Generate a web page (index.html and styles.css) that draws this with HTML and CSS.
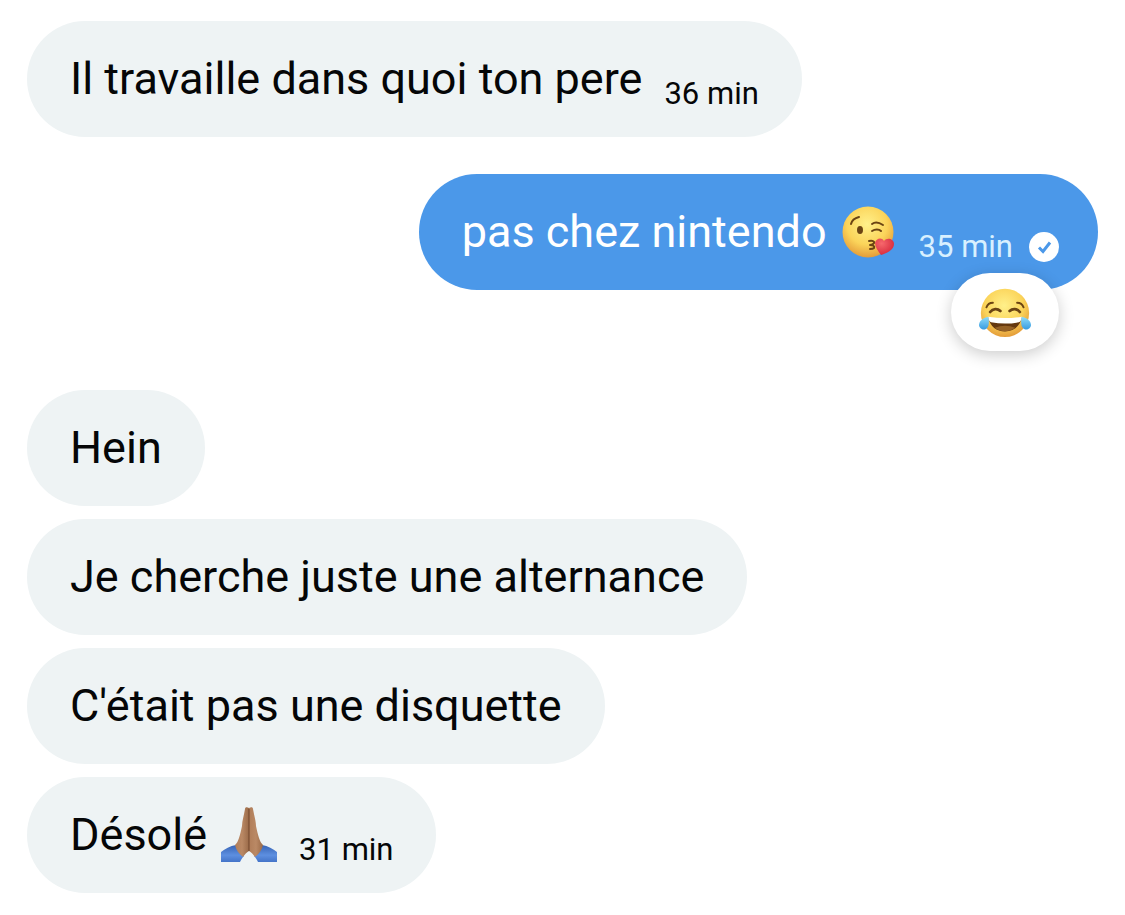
FILE: index.html
```html
<!DOCTYPE html>
<html lang="fr">
<head>
    <meta charset="UTF-8">
    <meta name="viewport" content="width=device-width, initial-scale=1.0">
    <title>Messages</title>
    <link rel="stylesheet" href="styles.css">
</head>
<body>
    <main class="chat">
        <div class="group">
            <div class="bubble">
                <span class="text">Il travaille dans quoi ton pere</span>
                <time class="time">36 min</time>
            </div>
        </div>

        <div class="group sent">
            <div class="bubble">
                <span class="text">pas chez nintendo</span>
                <svg class="emoji" viewBox="0 0 56 56" role="img" aria-label="Bisou">
                    <defs>
                        <radialGradient id="face" cx="48%" cy="35%" r="66%">
                            <stop offset="0" stop-color="#fff08a"/>
                            <stop offset="0.6" stop-color="#fbd45a"/>
                            <stop offset="1" stop-color="#e39a38"/>
                        </radialGradient>
                        <radialGradient id="heart" cx="35%" cy="30%" r="75%">
                            <stop offset="0" stop-color="#f6686c"/>
                            <stop offset="1" stop-color="#d6283b"/>
                        </radialGradient>
                    </defs>
                    <circle cx="27" cy="28" r="25.500" fill="url(#face)"/>
                    <g fill="none" stroke="#6b4413" stroke-linecap="round" stroke-linejoin="round">
                        <path d="M10 20c1-4 4-6 8-7" stroke-width="2"/>
                        <path d="M31 20c4-3 8-1 11 1M31 27c3-2 7-2 9 0" stroke-width="2"/>
                        <path d="M28 37c4-1 6 1 5 2-1 2-3 2-4 2 3 0 5 1 4 3-1 1-3 1-4 1" stroke-width="2"/>
                    </g>
                    <ellipse cx="19" cy="26" rx="3" ry="4" fill="#6b4413"/>
                    <path d="M40 51c-3-4-6-8-6-12 1-5 7-6 9-2 3-4 10-2 10 3 0 6-7 9-13 11z" fill="url(#heart)"/>
                </svg>
                <time class="time">35 min</time>
                <svg class="check" viewBox="0 0 30 30" role="img" aria-label="Envoyé">
                    <circle cx="15" cy="15" r="15" fill="#fff"/>
                    <path d="M10 15.500l4 4 7-9" fill="none" stroke="#4b98e9" stroke-width="3"/>
                </svg>
            </div>
            <button class="reaction" type="button" aria-label="Réaction">
                <svg class="emoji" viewBox="0 0 56 56" aria-hidden="true">
                    <defs>
                        <linearGradient id="tear" x1="0" y1="0" x2="0" y2="1">
                            <stop offset="0" stop-color="#8edcfa"/>
                            <stop offset="1" stop-color="#399be0"/>
                        </linearGradient>
                    </defs>
                    <circle cx="28" cy="29" r="26" fill="url(#face)"/>
                    <g fill="none" stroke="#6b4413" stroke-width="2" stroke-linecap="round">
                        <path d="M8 23c1-3 4-5 7-5M48 23c-1-3-4-5-7-5"/>
                        <path d="M12 28c3-4 8-4 11-1M44 28c-3-4-8-4-11-1" stroke-width="3"/>
                    </g>
                    <path d="M10 34c12 2 24 2 36 0-2 10-9 15-18 15s-16-5-18-15z" fill="#65380f"/>
                    <path d="M10 33c12 2 24 2 36 0 0 3-1 5-3 6-10 2-20 2-30 0-2-1-3-3-3-6z" fill="#fff"/>
                    <path d="M17 45c7-3 15-3 22 0-6 5-16 5-22 0z" fill="#956126"/>
                    <path d="M10 33c-6 1-10 5-10 9s6 7 9 3c2-3 2-7 1-12z" fill="url(#tear)"/>
                    <path d="M46 33c6 1 10 5 10 9s-6 7-9 3c-2-3-2-7-1-12z" fill="url(#tear)"/>
                </svg>
            </button>
        </div>

        <div class="group">
            <div class="bubble">
                <span class="text">Hein</span>
            </div>
            <div class="bubble">
                <span class="text">Je cherche juste une alternance</span>
            </div>
            <div class="bubble">
                <span class="text">C'était pas une disquette</span>
            </div>
            <div class="bubble">
                <span class="text">Désolé</span>
                <svg class="emoji" viewBox="0 0 56 56" role="img" aria-label="Mains jointes">
                    <defs>
                        <linearGradient id="sleeve" x1="0" y1="0" x2="0" y2="1">
                            <stop offset="0" stop-color="#3763b4"/>
                            <stop offset="0.6" stop-color="#5d8fe0"/>
                            <stop offset="1" stop-color="#4474c8"/>
                        </linearGradient>
                        <linearGradient id="skin" x1="0" y1="0" x2="1" y2="0">
                            <stop offset="0" stop-color="#b07d59"/>
                            <stop offset="0.5" stop-color="#ba8965"/>
                            <stop offset="1" stop-color="#9a6a48"/>
                        </linearGradient>
                    </defs>
                    <path d="M0 45c4-3 9-6 15-7l8 11c-2 2-3 4-4 6H0z" fill="url(#sleeve)"/>
                    <path d="M56 45c-4-3-9-6-15-7l-8 11c2 2 3 4 4 6h19z" fill="url(#sleeve)"/>
                    <path d="M14 38c1 5 4 9 8 12 2-3 4-5 6-6V1c-2-1-4-1-4 1-1 6-3 12-3 17-1 5-2 9-3 12s-2 5-4 7z" fill="url(#skin)"/>
                    <path d="M42 38c-1 5-4 9-8 12-2-3-4-5-6-6V1c2-1 4-1 4 1 1 6 3 12 3 17 1 5 2 9 3 12s2 5 4 7z" fill="url(#skin)"/>
                    <path d="M28 2v42" stroke="#70452b" stroke-width="1"/>
                </svg>
                <time class="time">31 min</time>
            </div>
        </div>
    </main>
</body>
</html>
```
FILE: styles.css
```css
* {
    box-sizing: border-box;
}
body {
    margin: 0;
    background-color: #fff;
    color: #050607;
    font-family: Roboto, Arial, sans-serif;
}
.chat {
    display: flex;
    flex-direction: column;
    gap: 37px;
    padding: 21px 27px;
}
.group {
    display: flex;
    flex-direction: column;
    align-items: flex-start;
    gap: 13px;
}
.sent {
    position: relative;
    align-items: flex-end;
    margin-bottom: 63px;
}
.bubble {
    display: flex;
    align-items: center;
    padding: 28px 43px;
    border-radius: 58px;
    background-color: #eef3f4;
}
.sent .bubble {
    padding-right: 39px;
    background-color: #4b98e9;
    color: #fff;
}
.text {
    font-size: 45px;
    line-height: 60px;
}
.time {
    margin-top: 30px;
    margin-left: 22px;
    font-size: 31px;
    line-height: 30px;
}
.sent .time {
    color: #d8f0ff;
}
.emoji {
    width: 56px;
    height: 56px;
    flex: none;
}
.text + .emoji {
    margin-left: 14px;
}
.check {
    width: 30px;
    height: 30px;
    margin-top: 30px;
    margin-left: 16px;
}
.reaction {
    position: absolute;
    right: 39px;
    bottom: -61px;
    display: flex;
    align-items: center;
    justify-content: center;
    width: 108px;
    height: 78px;
    padding: 0;
    border: none;
    border-radius: 39px;
    background-color: #fff;
    box-shadow: 0 4px 16px rgba(0, 0, 0, 0.2);
    cursor: pointer;
}
.reaction .emoji {
    width: 52px;
    height: 52px;
}
```
